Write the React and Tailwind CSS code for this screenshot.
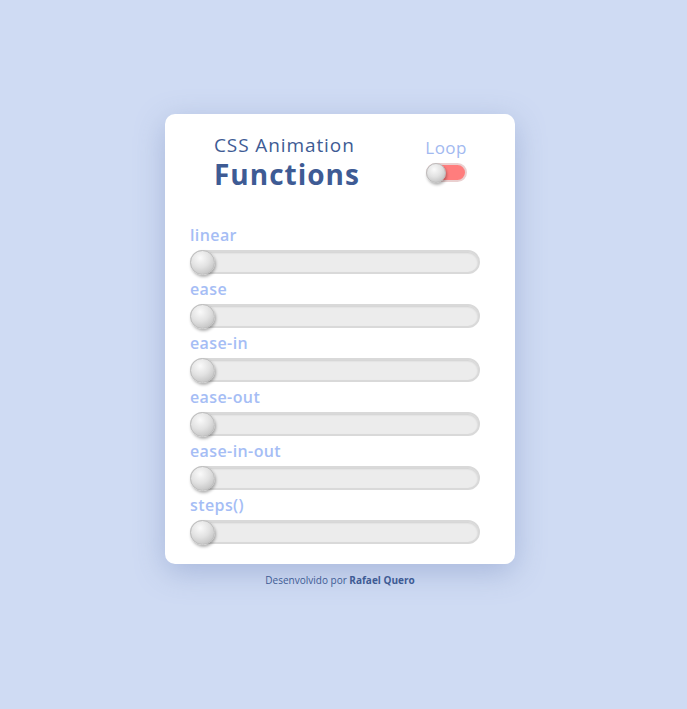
import React from 'react';

const functions = ['linear', 'ease', 'ease-in', 'ease-out', 'ease-in-out', 'steps()'];

const Knob = ({ size }) => (
  <div
    className={`${size} rounded-full border border-[#bdbdbd] bg-[radial-gradient(circle_at_40%_30%,#fafafa_0%,#e2e2e2_45%,#b5b5b5_100%)] shadow-[1px_2px_3px_rgba(0,0,0,0.3)]`}
  />
);

const App = () => {
  return (
    <div
      className="min-h-[709px] bg-[#cfdbf3] flex flex-col items-center pt-[114px] pr-[7px]"
      style={{ fontFamily: '"Open Sans", "Liberation Sans", sans-serif' }}
    >
      {/* Card */}
      <div className="w-[350px] h-[450px] bg-white rounded-[10px] shadow-[0_8px_30px_rgba(120,140,190,0.45)] pl-[25px] pr-[35px] pt-[21px]">
        <div className="flex items-start">
          <div className="pl-[24px] flex flex-col text-[#3e5b94]">
            <span className="text-[19px] leading-[20px] tracking-[0.9px]">CSS Animation</span>
            <span className="text-[28px] font-bold leading-[38px] tracking-[1px]">Functions</span>
          </div>
          <div className="ml-auto mr-[13px] mt-[2px] flex flex-col items-center">
            <span className="text-[#a2b9f0] text-[17px] leading-[22px] tracking-[0.5px]">Loop</span>
            <div className="mt-[4px] w-[41px] h-[19px] rounded-full bg-[#ff7d7d] border-2 border-[#ead0d0] flex items-center">
              <div className="-ml-[2px]">
                <Knob size="w-[20px] h-[20px]" />
              </div>
            </div>
          </div>
        </div>

        <div className="mt-[32px] flex flex-col gap-[5px]">
          {functions.map((fn) => (
            <div key={fn} className="flex flex-col">
              <span className="text-[#a5bdf5] text-[16px] leading-[20px] font-semibold tracking-[0.4px]">{fn}</span>
              <div className="mt-[5px] w-[290px] h-[24px] rounded-full bg-[#ececec] border-2 border-[#d9d9d9] shadow-[inset_0_1px_2px_rgba(0,0,0,0.12)] flex items-center">
                <div className="-ml-[2px]">
                  <Knob size="w-[25px] h-[25px]" />
                </div>
              </div>
            </div>
          ))}
        </div>
      </div>

      <p className="mt-[9px] text-[10px] text-[#3e5b94]">
        Desenvolvido por <span className="font-bold">Rafael Quero</span>
      </p>
    </div>
  );
};

export default App;
